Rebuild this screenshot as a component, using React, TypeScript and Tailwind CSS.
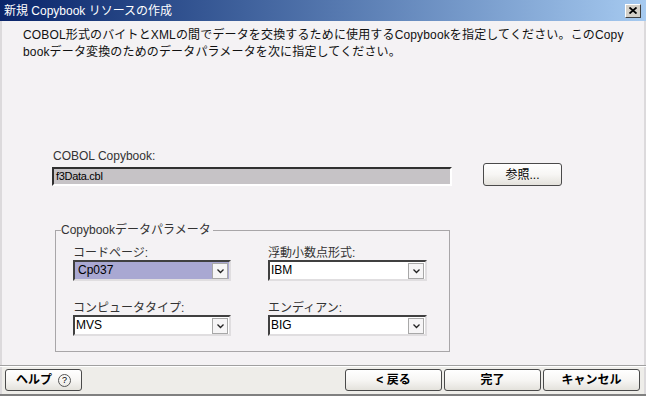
import React from "react";

const Chevron = () => (
  <svg width="9" height="6" viewBox="0 0 9 6" className="block">
    <path d="M1.5 1.5 L4.5 4.5 L7.5 1.5" fill="none" stroke="#222" strokeWidth="1.3" />
  </svg>
);

const Combo = ({ value, selected }: { value: string; selected?: boolean }) => {
  return (
    <div
      className={`flex h-[21px] w-full items-center border-2 border-t-[#404040] border-l-[#404040] border-b-[#e0dee0] border-r-[#e0dee0] ${
        selected ? "bg-[#a9a8d2]" : "bg-white"
      }`}
    >
      <span className={`flex-1 text-[12px] leading-[17px] ${selected ? "pl-[3px]" : "pl-[1px]"}`}>{value}</span>
      <span className="mr-[1px] flex h-[16px] w-[16px] items-center justify-center border border-[#a8a8a8] bg-[#f6f5f6]">
        <Chevron />
      </span>
    </div>
  );
};

const Field = ({ label, value, selected }: { label: string; value: string; selected?: boolean }) => {
  return (
    <div className="flex flex-col">
      <span className="text-[12px] leading-[14px] text-[#333]">{label}</span>
      <Combo value={value} selected={selected} />
    </div>
  );
};

const DlgButton = ({ children, className }: { children: React.ReactNode; className?: string }) => {
  return (
    <button
      className={`flex items-center justify-center rounded-[3px] border border-[#4a4a4a] bg-gradient-to-b from-white via-[#f7f6f4] to-[#e4e2dc] text-[12px] text-black ${className ?? ""}`}
    >
      {children}
    </button>
  );
};

const TitleBar = () => {
  return (
    <div className="flex h-[21px] shrink-0 items-center bg-gradient-to-r from-[#0a246a] to-[#a6caf0] pl-[4px] pr-[5px]">
      <span className="flex-1 whitespace-nowrap text-[12px] leading-[14px] text-white">
        新規 Copybook リソースの作成
      </span>
      <span className="flex h-[14px] w-[16px] items-center justify-center border border-t-white border-l-white border-b-[#404040] border-r-[#404040] bg-[#d4d0c8]">
        <svg width="8" height="7" viewBox="0 0 8 7">
          <path d="M0.5 0.5 L7.5 6.5 M7.5 0.5 L0.5 6.5" stroke="#000" strokeWidth="1.8" />
        </svg>
      </span>
    </div>
  );
};

export default function App() {
  return (
    <div className="flex h-[396px] w-[646px] flex-col overflow-hidden bg-[#f4f2f4] font-['Liberation_Sans','Noto_Sans_CJK_JP',sans-serif] text-[12px] text-black">
      <TitleBar />
      <main className="flex flex-1 flex-col border-l-2 border-r-2 border-l-[#dcdadc] border-r-[#dcdadc] pl-[21px]">
        <p className="whitespace-nowrap pt-[6px] leading-[17px] tracking-[0.15px] text-[#111]">
          COBOL形式のバイトとXMLの間でデータを交換するために使用するCopybookを指定してください。このCopy
          <br />
          bookデータ変換のためのデータパラメータを次に指定してください。
        </p>

        <span className="ml-[30px] mt-[88px] leading-[14px] text-[#333]">COBOL Copybook:</span>
        <div className="flex h-[23px] items-end">
          <div className="ml-[29px] flex h-[19px] w-[400px] items-center border-2 border-t-[#303030] border-l-[#303030] border-b-white border-r-white bg-[#c6c3c6] pl-[2px] text-[11px] tracking-[-0.3px]">
            f3Data.cbl
          </div>
          <DlgButton className="ml-[31px] h-[23px] w-[79px]">参照...</DlgButton>
        </div>

        <div className="relative ml-[32px] mt-[44px] w-[395px] border border-[#a8a6a8] px-[17px] pt-[15px] pb-[15px]">
          <span className="absolute left-[5px] top-[-8px] bg-[#f4f2f4] pr-[2px] text-[12px] leading-[14px] text-[#333]">
            Copybookデータパラメータ
          </span>
          <div className="grid grid-cols-[158px_159px] gap-x-[37px] gap-y-[20px]">
            <Field label="コードページ:" value="Cp037" selected />
            <Field label="浮動小数点形式:" value="IBM" />
            <Field label="コンピュータタイプ:" value="MVS" />
            <Field label="エンディアン:" value="BIG" />
          </div>
        </div>
      </main>

      <footer className="flex h-[31px] shrink-0 items-start border-t border-t-[#a0a0a0] bg-[#eeede9] pt-[3px] pl-[5px] pr-[6px] shadow-[inset_0_1px_0_#fff,inset_0_-2px_0_#808080,inset_2px_0_0_#dcdadc,inset_-2px_0_0_#dcdadc]">
        <DlgButton className="h-[22px] w-[77px] gap-[6px] font-bold">
          ヘルプ
          <span className="flex h-[13px] w-[13px] items-center justify-center rounded-full border border-[#555] text-[9px] font-normal leading-none">
            ?
          </span>
        </DlgButton>
        <div className="flex-1" />
        <div className="flex gap-[2px]">
          <DlgButton className="h-[22px] w-[97px] font-bold">&lt; 戻る</DlgButton>
          <DlgButton className="h-[22px] w-[97px] font-bold">完了</DlgButton>
          <DlgButton className="h-[22px] w-[97px] font-bold">キャンセル</DlgButton>
        </div>
      </footer>
    </div>
  );
}
